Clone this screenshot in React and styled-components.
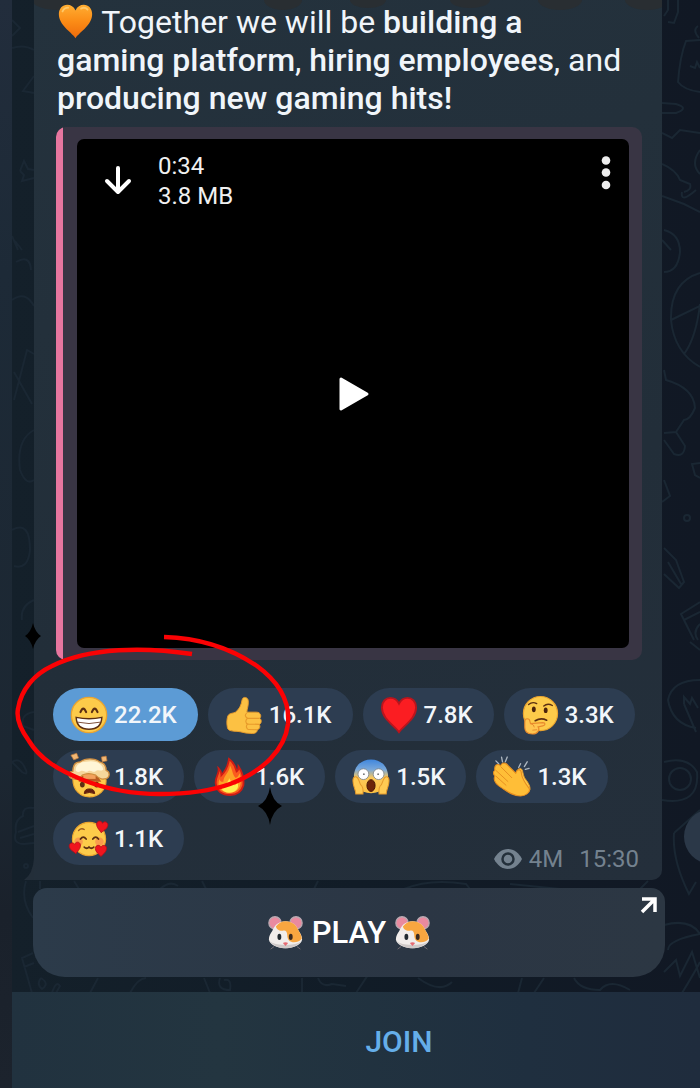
import React from "react";
import styled, { createGlobalStyle } from "styled-components";

const GlobalStyle = createGlobalStyle`
  * {
    box-sizing: border-box;
  }
  body {
    margin: 0;
    background: #131c27;
    font-family: Roboto, "Noto Sans", sans-serif;
    overflow-x: hidden;
  }
  button {
    font-family: inherit;
    border: none;
    cursor: pointer;
  }
`;

/* ---------- emoji drawings, all on a 40 x 40 grid ---------- */

const FACE = "#fdcb4a";
const SKIN = "#fcc143";
const SHADE = "#e79a2b";
const DARK = "#5c2f12";
const HEART =
  "M20 38C15 31 2 24 2 12C2 6 6 2 11 2C15 2 18 4 20 8C22 4 25 2 29 2C34 2 38 6 38 12C38 24 25 31 20 38Z";

const Grin = () => (
  <>
    <circle cx="20" cy="20" r="18.6" fill={FACE} stroke="#eba42f" strokeWidth="1.4" />
    <path d="M11 17Q14 9.500 17 17M23 17Q26 9.500 29 17" fill="none" stroke={DARK} strokeWidth="2.200" strokeLinecap="round" />
    <path d="M6.500 22.500Q20 25.500 33.500 22.500Q33 35 20 35Q7 35 6.500 22.500Z" fill="#fff" stroke={DARK} strokeWidth="1.500" />
    <path d="M8 27.500Q20 30.500 32 27.500" fill="none" stroke="#7a4b35" strokeWidth="1" />
  </>
);

const ThumbUp = () => (
  <>
    <path
      d="M3 21C4 18 8 18.500 11 17C15 14 17 10 18 4C18.500 0.500 24 0.500 24.500 5C25 10 23 14 23 17L33 17C38 17 38.500 22 36.500 23.500C39 25 38.500 29 36 30C37.500 32 36.500 35 34 35.500C34 38 32 39.500 29 39.500L22 39C18 38 14 37 9 37C5 36.500 3 36 2.500 33C1.500 28 2 24 3 21Z"
      fill={SKIN}
      stroke={SHADE}
      strokeWidth="1"
    />
    <path d="M23 18C20 20 22 23 24 23.500C21 25 21.500 29 24 29.500C21.500 31 22.500 35 25 35.500M24 23.500L36 23.500M24 29.500L36 29.800M25 35.300L34 35.500" fill="none" stroke={SHADE} strokeWidth="1.200" />
  </>
);

const RedHeart = () => (
  <path d={HEART} fill="#fb1d22" stroke="#b9151d" strokeWidth="2" />
);

const Thinking = () => (
  <>
    <circle cx="20.500" cy="18.500" r="18" fill={FACE} stroke="#eba42f" strokeWidth="1.200" />
    <path d="M8 9Q12 5.500 16.500 8M24 10.500Q28 7 33 10" fill="none" stroke={DARK} strokeWidth="1.500" strokeLinecap="round" />
    <ellipse cx="13.500" cy="14" rx="2" ry="3" fill="#4a230c" />
    <ellipse cx="26" cy="15" rx="2" ry="3" fill="#4a230c" />
    <path d="M15 26Q21 22.500 27 25.500" fill="none" stroke={DARK} strokeWidth="1.800" strokeLinecap="round" />
    <path
      d="M4 27C4 23 9 23 9.500 27L10 29L23 28C26 28 26 31 23 31.500L18 32.500C20 35 18 40 12 40C6 40 4 37 4 33Z"
      fill="#ffc550"
      stroke="#e88a2c"
      strokeWidth="1.200"
    />
    <path d="M10 29Q14 30 14 33M12 36L17 35.500" fill="none" stroke="#e88a2c" strokeWidth="1" />
  </>
);

const Exploding = () => (
  <>
    <path d="M3 22C3 20 4 18 6 17L35 17C37 19 38 21 38 24C38 34 30 41 20.500 41C11 41 3 34 3 22Z" fill={FACE} stroke="#eba42f" strokeWidth="1.200" />
    <path d="M12 19L29 19L33 25L9 25Z" fill="#b85a22" />
    <path d="M14 17L27 17L27 22L14 22Z" fill="#f3a05c" />
    <path
      d="M3 22C-3 20 -2 14 3 14C3 8 5 4 11 4C16 0 26 0 31 4C36 5 38 9 38 13C43 15 42 22 36 22C32 23 29 20 27 18C22 16 17 16 13 18C10 22 6 23 3 22Z"
      fill="#f6d79c"
      stroke="#cf8e41"
      strokeWidth="1.400"
    />
    <path d="M6 13C6 7 11 4 17 4C25 2 34 5 35 12C32 15 30 11 27 14C24 16 22 12 19 14C16 16 14 12 11 14C9 15 7 15 6 13Z" fill="#fff5d6" />
    <path d="M1 -3L7 -5L9 0L4 2ZM33 -1L38 -2L39 3L34 4Z" fill="#f2b774" stroke="#b9773a" strokeWidth="0.800" />
    <ellipse cx="13" cy="28" rx="2.500" ry="3" fill={DARK} />
    <ellipse cx="28" cy="28" rx="2.500" ry="3" fill={DARK} />
    <path d="M15 37.500Q15 32.500 20.500 32.500Q26 32.500 26 37.500Q20.500 35 15 37.500Z" fill="#63200d" stroke="#63200d" />
  </>
);

const Fire = () => (
  <>
    <path
      d="M19 1C24 5 26 9 27 14C29 13 29 11 29 9C33 15 35 21 34 29C32 36 27 39 20 39C12 39 6 35 5 27C4 20 9 17 8 11C10 13 11 15 11 18C16 13 18 8 19 1Z"
      fill="#fb5a1e"
      stroke="#cf1c14"
      strokeWidth="2"
    />
    <path d="M20 8C23 13 22 17 26 21C29 20 29 18 30 16C33 25 32 36 20 36.500C9 36.500 6 29 9 22C10 25 11 25 13 25C13 19 19 16 20 8Z" fill="#fda326" />
    <path d="M19 21C20 25 24 25 25 29L28 26C30 32 26 36.500 19 36.500C12 36.500 10 32 12 28L15 30C15 26 19 25 19 21Z" fill="#fff04f" />
  </>
);

const Scream = () => (
  <>
    <defs>
      <linearGradient id="screamFace" x1="0" y1="0" x2="0" y2="1">
        <stop offset="0" stopColor="#3f86dd" />
        <stop offset="0.300" stopColor="#79a8da" />
        <stop offset="0.550" stopColor="#fcc858" />
        <stop offset="1" stopColor="#fcc143" />
      </linearGradient>
    </defs>
    <path d="M2 18C3 8 10 1.500 20 1.500C30 1.500 37 8 38 18C38 29 32 37 20 37C8 37 2 29 2 18Z" fill="url(#screamFace)" />
    <path d="M1 24C1 19 5 18 7 23L9 28C12 30 12 33 11.500 38L4 38C4 33 1 30 1 24ZM39 24C39 19 35 18 33 23L31 28C28 30 28 33 28.500 38L36 38C36 33 39 30 39 24Z" fill="#ffca53" stroke="#e59a2c" strokeWidth="1.100" />
    <circle cx="12" cy="17" r="5.700" fill="#fff" stroke="#7f8589" strokeWidth="0.900" />
    <circle cx="28" cy="17" r="5.700" fill="#fff" stroke="#7f8589" strokeWidth="0.900" />
    <circle cx="12.500" cy="17" r="1" fill="#777" />
    <circle cx="27.500" cy="17" r="1" fill="#777" />
    <ellipse cx="20" cy="29" rx="4.300" ry="6.200" fill="#6d2409" stroke="#431304" />
  </>
);

const Clap = () => (
  <>
    <path d="M3 3L6 6M9 -1L10 4M15 -1L13 4M29 6L27 10M36 4L33 9M38 11L34 12" stroke="#aeb7c0" strokeWidth="1.400" strokeLinecap="round" />
    <path d="M22 21C24 14 26 11 29 11C32 12 31 18 34 22C38 27 39 30 39 33C38 36 35 39 30 38Z" fill="#ffcb4b" stroke={SHADE} />
    <path
      d="M2 13C1 8 4 5 8 8C10 4 14 5 16 8L24 16C26 10 30 12 30 17C31 23 35 28 38 32C40 36 34 40 29 40C21 40 16 36 10 32C3 28 0 23 2 19C0 17 0 14 2 13Z"
      fill="#ffbe37"
      stroke="#e58d20"
      strokeWidth="1.100"
    />
    <path d="M8 9L20 21M3 13L16 25M3 19L14 29" stroke="#e58d20" strokeWidth="1" fill="none" />
  </>
);

const Loving = () => (
  <>
    <circle cx="20" cy="20" r="17.500" fill={FACE} stroke="#eba42f" strokeWidth="1.200" />
    <circle cx="9" cy="23" r="4.500" fill="#f7884f" opacity="0.700" />
    <circle cx="31" cy="23" r="4.500" fill="#f7884f" opacity="0.700" />
    <path d="M11 20Q14 16 17 20M24 20Q27 16 30 20M15 28.500Q17.500 31 20 28.500Q22.500 31 25 28.500" fill="none" stroke={DARK} strokeWidth="1.800" strokeLinecap="round" />
    <path d="M9 11Q12 8 15 10" fill="none" stroke="#9a5a20" strokeWidth="1.400" strokeLinecap="round" />
    <g fill="#f0151e" stroke="#b20e18" strokeWidth="2.500">
      <path d={HEART} transform="translate(28 0) rotate(8) scale(0.330)" />
      <path d={HEART} transform="translate(-2 24) rotate(-8) scale(0.330)" />
      <path d={HEART} transform="translate(26 26) scale(0.330)" />
    </g>
  </>
);

const OrangeHeart = () => (
  <>
    <defs>
      <linearGradient id="orangeHeart" x1="0" y1="0" x2="0" y2="1">
        <stop offset="0" stopColor="#ffad32" />
        <stop offset="0.500" stopColor="#fb8c16" />
        <stop offset="1" stopColor="#ee6b0b" />
      </linearGradient>
    </defs>
    <path d={HEART} fill="url(#orangeHeart)" />
    <path d="M6 9Q8 5 12 5M26 6Q30 4 33 7" fill="none" stroke="#ffc868" strokeWidth="2" strokeLinecap="round" />
  </>
);

const Hamster = () => (
  <>
    <circle cx="8" cy="9" r="7" fill="#e98a9f" stroke="#b9a9b1" strokeWidth="1.500" />
    <circle cx="32" cy="9" r="7" fill="#e98a9f" stroke="#b9a9b1" strokeWidth="1.500" />
    <path d="M20 7C28 7 33 12 35 18C37 21 39 24 39 28C38 34 30 38 20 38C10 38 2 34 1 28C1 24 3 21 5 18C7 12 12 7 20 7Z" fill="#f1edeb" />
    <path d="M9 13C12 9 16 7 20 7C28 7 33 12 35 18C37 21 38.500 24 38.500 27C36 30 33 31 30 31C25 31 22 28 22 23C22 19 20 17 17 18C14 18 10 17 9 13Z" fill="#f8a640" />
    <path d="M2 30C7 36 14 38 20 38C26 38 33 36 38 30C34 33 28 34 24 34L16 34C12 34 6 33 2 30Z" fill="#cfc9c8" />
    <ellipse cx="13" cy="25" rx="2.200" ry="3.500" fill="#222a31" />
    <ellipse cx="26" cy="25" rx="2.200" ry="3.500" fill="#3a2a20" />
    <path d="M17 32Q20 30 23 32L20 35.500Z" fill="#e56b73" />
    <path d="M7 36L3 39M33 36L37 39" fill="none" stroke="#7d7479" strokeWidth="1" />
  </>
);

const EmojiSvg = styled.svg`
  width: ${(props) => props.$size}px;
  height: ${(props) => props.$size}px;
  flex-shrink: 0;
  overflow: visible;
  vertical-align: ${(props) => (props.$inline ? "-7px" : "middle")};
`;

const Emoji = ({ label, size = 38, inline, children }) => (
  <EmojiSvg $size={size} $inline={inline} viewBox="0 0 40 40" role="img" aria-label={label}>
    {children}
  </EmojiSvg>
);

/* ---------- page ---------- */

const Page = styled.div`
  position: relative;
  display: flex;
  min-height: 100vh;
  overflow: hidden;
`;

const Edge = styled.div`
  flex: 0 0 12px;
  background: linear-gradient(#222d3c, #1d2a37 25%, #1c2732 70%, #1a212b 84%, #1c232d);
`;

const Chat = styled.main`
  position: relative;
  flex: 1;
  min-width: 0;
  display: flex;
  flex-direction: column;
  background: linear-gradient(90deg, #14202a, #111c27 50%, #111824);
`;

const Doodles = styled.svg`
  position: absolute;
  top: 0;
  ${(props) => props.$side}: 0;
  height: 1088px;
  fill: none;
  stroke: #1a2733;
  stroke-width: 2;
`;

const Bubble = styled.article`
  position: relative;
  margin: 0 38px 8px 22px;
  padding: 3px 20px 0 19px;
  border-radius: 0 0 10px 0;
  background: linear-gradient(160deg, #24323d, #222e39 60%, #242f3b);
`;

const Tail = styled.svg`
  position: absolute;
  left: -10px;
  bottom: 0;
  width: 10px;
  height: 22px;
  fill: #232e39;
`;

const TopShade = styled.svg`
  position: absolute;
  top: 0;
  left: 0;
  width: 100%;
  height: 11px;
  fill: #2b2e30;
  opacity: 0.8;
`;

const Message = styled.p`
  position: relative;
  margin: 0 0 10px 4px;
  font-size: 32px;
  line-height: 38px;
  color: #f0f5fa;

  b {
    font-weight: 500;
  }
`;

const Quote = styled.div`
  margin-left: 3px;
  padding: 12px 13px 12px 21px;
  border-radius: 10px;
  background: linear-gradient(90deg, #e7769f 7px, #393544 7px);
`;

const Video = styled.div`
  display: grid;
  grid-template-columns: auto 1fr auto;
  grid-template-rows: auto 1fr;
  aspect-ratio: 552 / 509;
  border-radius: 7px;
  background: #000;
  color: #f0f0f0;
`;

const VideoButton = styled.button`
  display: flex;
  padding: 0;
  background: none;
  color: #fff;
`;

const Download = styled(VideoButton)`
  padding: 26px 26px 0 27px;
`;

const More = styled(VideoButton)`
  padding: 16px 18px 0 0;
`;

const Play = styled(VideoButton)`
  grid-column: 1 / -1;
  align-self: start;
  justify-self: center;
  padding: 165px 0 0 2px;
`;

const FileInfo = styled.div`
  padding-top: 12px;
  font-size: 24px;
  line-height: 30px;
`;

const Footer = styled.div`
  display: grid;
  margin-top: 28px;
`;

const Reactions = styled.div`
  grid-area: 1 / 1;
  position: relative;
  display: flex;
  flex-wrap: wrap;
  gap: 9px 10px;
  padding-bottom: 15px;
`;

const Reaction = styled.button`
  display: flex;
  align-items: center;
  gap: 6px;
  height: 53px;
  padding: 0 21px 0 17px;
  border-radius: 27px;
  background: ${(props) => (props.$chosen ? "#5c9bd5" : "#2d3d51")};
  color: #f2f6fa;
  font-size: 24px;
  font-weight: 500;
`;

const Meta = styled.div`
  grid-area: 1 / 1;
  align-self: end;
  justify-self: end;
  display: flex;
  align-items: center;
  padding: 0 3px 7px 0;
  font-size: 24px;
  line-height: 28px;
  color: #74828f;

  svg {
    margin-right: 7px;
  }
  time {
    margin-left: 16px;
  }
`;

const Marker = styled.svg`
  position: absolute;
  left: -53px;
  top: -69px;
  width: 300px;
  height: 220px;
  pointer-events: none;
`;

const PlayBar = styled.button`
  position: relative;
  display: flex;
  align-items: center;
  justify-content: center;
  gap: 9px;
  height: 89px;
  margin: 0 35px 15px 21px;
  padding: 0;
  border-radius: 14px 14px 32px 32px;
  background: linear-gradient(90deg, #2c3b4a, #2b3644 60%, #2c3743);
  color: #fff;
  font-size: 31px;
  font-weight: 500;
`;

const Corner = styled.svg`
  position: absolute;
  top: 9px;
  right: 8px;
`;

const Join = styled.button`
  position: relative;
  flex: 1;
  min-height: 95px;
  padding: 2px 0 0 86px;
  background: linear-gradient(90deg, #21323f, #233540 30%, #1f2f3f 75%, #1f2c3d);
  color: #65aee9;
  font-size: 30px;
  font-weight: 500;
`;

const ScrollDown = styled.button`
  position: absolute;
  top: 809px;
  right: -39px;
  width: 55px;
  height: 55px;
  border-radius: 50%;
  background: #2b3848;
`;

const reactions = [
  { label: "Grinning", count: "22.2K", Art: Grin, chosen: true },
  { label: "Thumbs up", count: "16.1K", Art: ThumbUp },
  { label: "Red heart", count: "7.8K", Art: RedHeart },
  { label: "Thinking", count: "3.3K", Art: Thinking },
  { label: "Mind blown", count: "1.8K", Art: Exploding },
  { label: "Fire", count: "1.6K", Art: Fire },
  { label: "Screaming", count: "1.5K", Art: Scream },
  { label: "Clapping", count: "1.3K", Art: Clap },
  { label: "Smiling with hearts", count: "1.1K", Art: Loving },
];

const Wallpaper = () => (
  <>
    <Doodles $side="left" width="688" viewBox="12 0 688 1088" aria-hidden="true">
      <path d="M12 20L20 28L12 36M12 48Q24 44 34 50M34 76L23 91L34 93M20 171L24 161L28 169L34 170M20 171L24 175L22 181L34 178" />
      <path d="M12 236L18 250M15 241L22 250M16 262Q30 254 31 270M14 400L27 350L34 354M14 372L32 404M12 300Q25 290 34 306" />
      <path d="M34 430Q16 440 20 470Q26 486 34 480M12 530Q30 520 30 550Q28 570 14 566M34 600Q20 606 22 620" />
      <path d="M34 712Q20 714 23 726L34 730M12 762Q20 756 26 770Q28 776 22 772ZM34 808Q22 806 23 816Q14 820 16 832Q12 844 24 844L34 843M18 832L34 826M20 838L34 834" />
      <circle cx="26" cy="866" r="2" />
      <path d="M26 881Q20 900 33 918M40 881L40 889M74 881L79 889M160 889Q170 880 178 886M202 881L206 889M314 889L318 881M404 889Q430 878 466 884L470 889M510 884L560 889M640 889L648 881" />
      <path d="M33 953L22 958L32 993M24 967L34 963M41 978Q50 984 42 989Q36 984 41 978M52 993Q56 980 60 986L56 993M90 993L98 978M130 993Q138 978 146 978M204 978L210 993M220 978Q216 990 230 990Q232 978 224 980M302 978L302 993M318 978Q322 988 332 984L346 986M356 993Q370 972 366 978M418 978Q440 994 452 982M518 993L522 978M534 993L544 978M574 978Q580 990 600 990Q610 978 630 990" />
    </Doodles>
    <Doodles $side="right" width="38" viewBox="662 0 38 1088" aria-hidden="true">
      <path d="M664 16L668 10L668 0M678 0L678 12L674 23L668 22M699 38Q692 30 698 26M700 40L686 41Q680 56 678 82Q684 90 700 92M690 66L695 68L697 62L700 68M662 103L676 104Q690 108 676 113L662 113" />
      <path d="M662 133L672 138L680 130L700 133M662 164Q676 170 680 180L690 184Q692 190 684 192M700 150Q690 164 700 174M682 192Q680 204 696 190M662 196L684 204L700 212" />
      <path d="M664 230Q680 234 680 252Q678 272 664 272M662 240L671 250M700 273Q670 282 671 320Q674 352 700 367M671 320L700 306M684 354Q696 338 700 304" />
      <path d="M664 370L666 380Q694 388 695 408Q690 420 684 420L676 432L664 433M664 440L674 454Q684 458 685 446L676 432M700 463L692 464L695 475L700 478M664 480L670 496L662 502" />
      <circle cx="687" cy="518" r="3" />
      <path d="M664 548L676 560L684 582L679 588L664 574M668 562L681 584M700 602L681 614L694 640M684 620L700 612M700 624Q692 632 698 640M700 650L690 642" />
      <path d="M700 680Q672 680 668 700Q672 724 696 728M684 704L684 697L690 704L692 698L698 708M684 704L696 732M662 800Q700 806 697 772Q688 756 664 762" />
      <circle cx="680" cy="779" r="11" />
      <path d="M674 833Q672 860 689 894L696 882M700 810Q682 826 674 833M664 925Q690 918 700 934M700 934Q668 940 668 950M664 972L676 960L680 976L692 952L700 978M682 993Q696 970 700 962" />
    </Doodles>
  </>
);

export default function App() {
  return (
    <Page>
      <GlobalStyle />
      <Edge />
      <Chat>
        <Wallpaper />
        <ScrollDown aria-label="Scroll to bottom" />
        <Bubble>
          <TopShade viewBox="34 0 628 11" preserveAspectRatio="none" aria-hidden="true">
            <ellipse cx="58" cy="0" rx="26" ry="10" />
            <ellipse cx="283" cy="0" rx="19" ry="10" />
            <ellipse cx="368" cy="0" rx="18" ry="8" />
            <ellipse cx="470" cy="0" rx="20" ry="8" />
            <ellipse cx="560" cy="0" rx="22" ry="10" />
            <ellipse cx="647" cy="0" rx="22" ry="10" />
          </TopShade>
          <Tail viewBox="0 0 10 22" aria-hidden="true">
            <path d="M10 0Q9 16 0 22L10 22Z" />
          </Tail>
          <Message>
            <Emoji label="Orange heart" size={37} inline>
              <OrangeHeart />
            </Emoji>{" "}
            Together we will be <b>building a</b>
            <br />
            <b>gaming platform</b>, <b>hiring employees</b>, and
            <br />
            <b>producing new gaming hits!</b>
          </Message>
          <Quote>
            <Video>
              <Download aria-label="Download">
                <svg width="28" height="30" viewBox="0 0 28 30" fill="none" stroke="#fff" strokeWidth="4" strokeLinecap="round" strokeLinejoin="round">
                  <path d="M14 3V26M3 16L14 27L25 16" />
                </svg>
              </Download>
              <FileInfo>
                <div>0:34</div>
                <div>3.8 MB</div>
              </FileInfo>
              <More aria-label="More options">
                <svg width="10" height="36" viewBox="0 0 10 36" fill="#ededed">
                  <circle cx="5" cy="5.500" r="4.300" />
                  <circle cx="5" cy="17.500" r="4.300" />
                  <circle cx="5" cy="30" r="4.300" />
                </svg>
              </More>
              <Play aria-label="Play video">
                <svg width="32" height="36" viewBox="0 0 32 36" fill="#fff" stroke="#fff" strokeWidth="3" strokeLinejoin="round">
                  <path d="M3 3L29 18L3 33Z" />
                </svg>
              </Play>
            </Video>
          </Quote>
          <Footer>
            <Meta>
              <svg width="28" height="20" viewBox="0 0 28 20">
                <path d="M0 10C3 4 8 0 14 0C20 0 25 4 28 10C25 16 20 20 14 20C8 20 3 16 0 10Z" fill="#74828f" />
                <circle cx="14" cy="10" r="5.500" fill="#74828f" stroke="#24303b" strokeWidth="2.500" />
              </svg>
              <span>4M</span>
              <time>15:30</time>
            </Meta>
            <Reactions>
              {reactions.map(({ label, count, Art, chosen }) => (
                <Reaction key={label} $chosen={chosen} aria-pressed={!!chosen}>
                  <Emoji label={label}>
                    <Art />
                  </Emoji>
                  <span>{count}</span>
                </Reaction>
              ))}
              <Marker viewBox="0 620 300 220" aria-hidden="true">
                <path
                  d="M164 638C200 639 232 650 257 667C279 683 290 703 288 725C285 750 264 772 230 785C208 793 184 795 160 795C132 795 106 790 83 781C58 771 40 760 29 742C21 731 16 720 18 710C21 690 35 675 52 667C90 648 145 648 192 655"
                  fill="none"
                  stroke="#fb0204"
                  strokeWidth="4.500"
                />
                <path d="M33 624Q35 633 41 637Q35 641 33 650Q31 641 25 637Q31 633 33 624Z" />
                <path d="M270 788Q272 802 282 807Q272 812 270 826Q268 812 258 807Q268 802 270 788Z" />
              </Marker>
            </Reactions>
          </Footer>
        </Bubble>
        <PlayBar>
          <Emoji label="Hamster" size={35}>
            <Hamster />
          </Emoji>
          <span>PLAY</span>
          <Emoji label="Hamster" size={35}>
            <Hamster />
          </Emoji>
          <Corner width="17" height="17" viewBox="0 0 17 17" fill="none" stroke="#fff" strokeWidth="3.500" aria-hidden="true">
            <path d="M2 2H15V15M15 2L2 15" />
          </Corner>
        </PlayBar>
        <Join>JOIN</Join>
      </Chat>
    </Page>
  );
}
